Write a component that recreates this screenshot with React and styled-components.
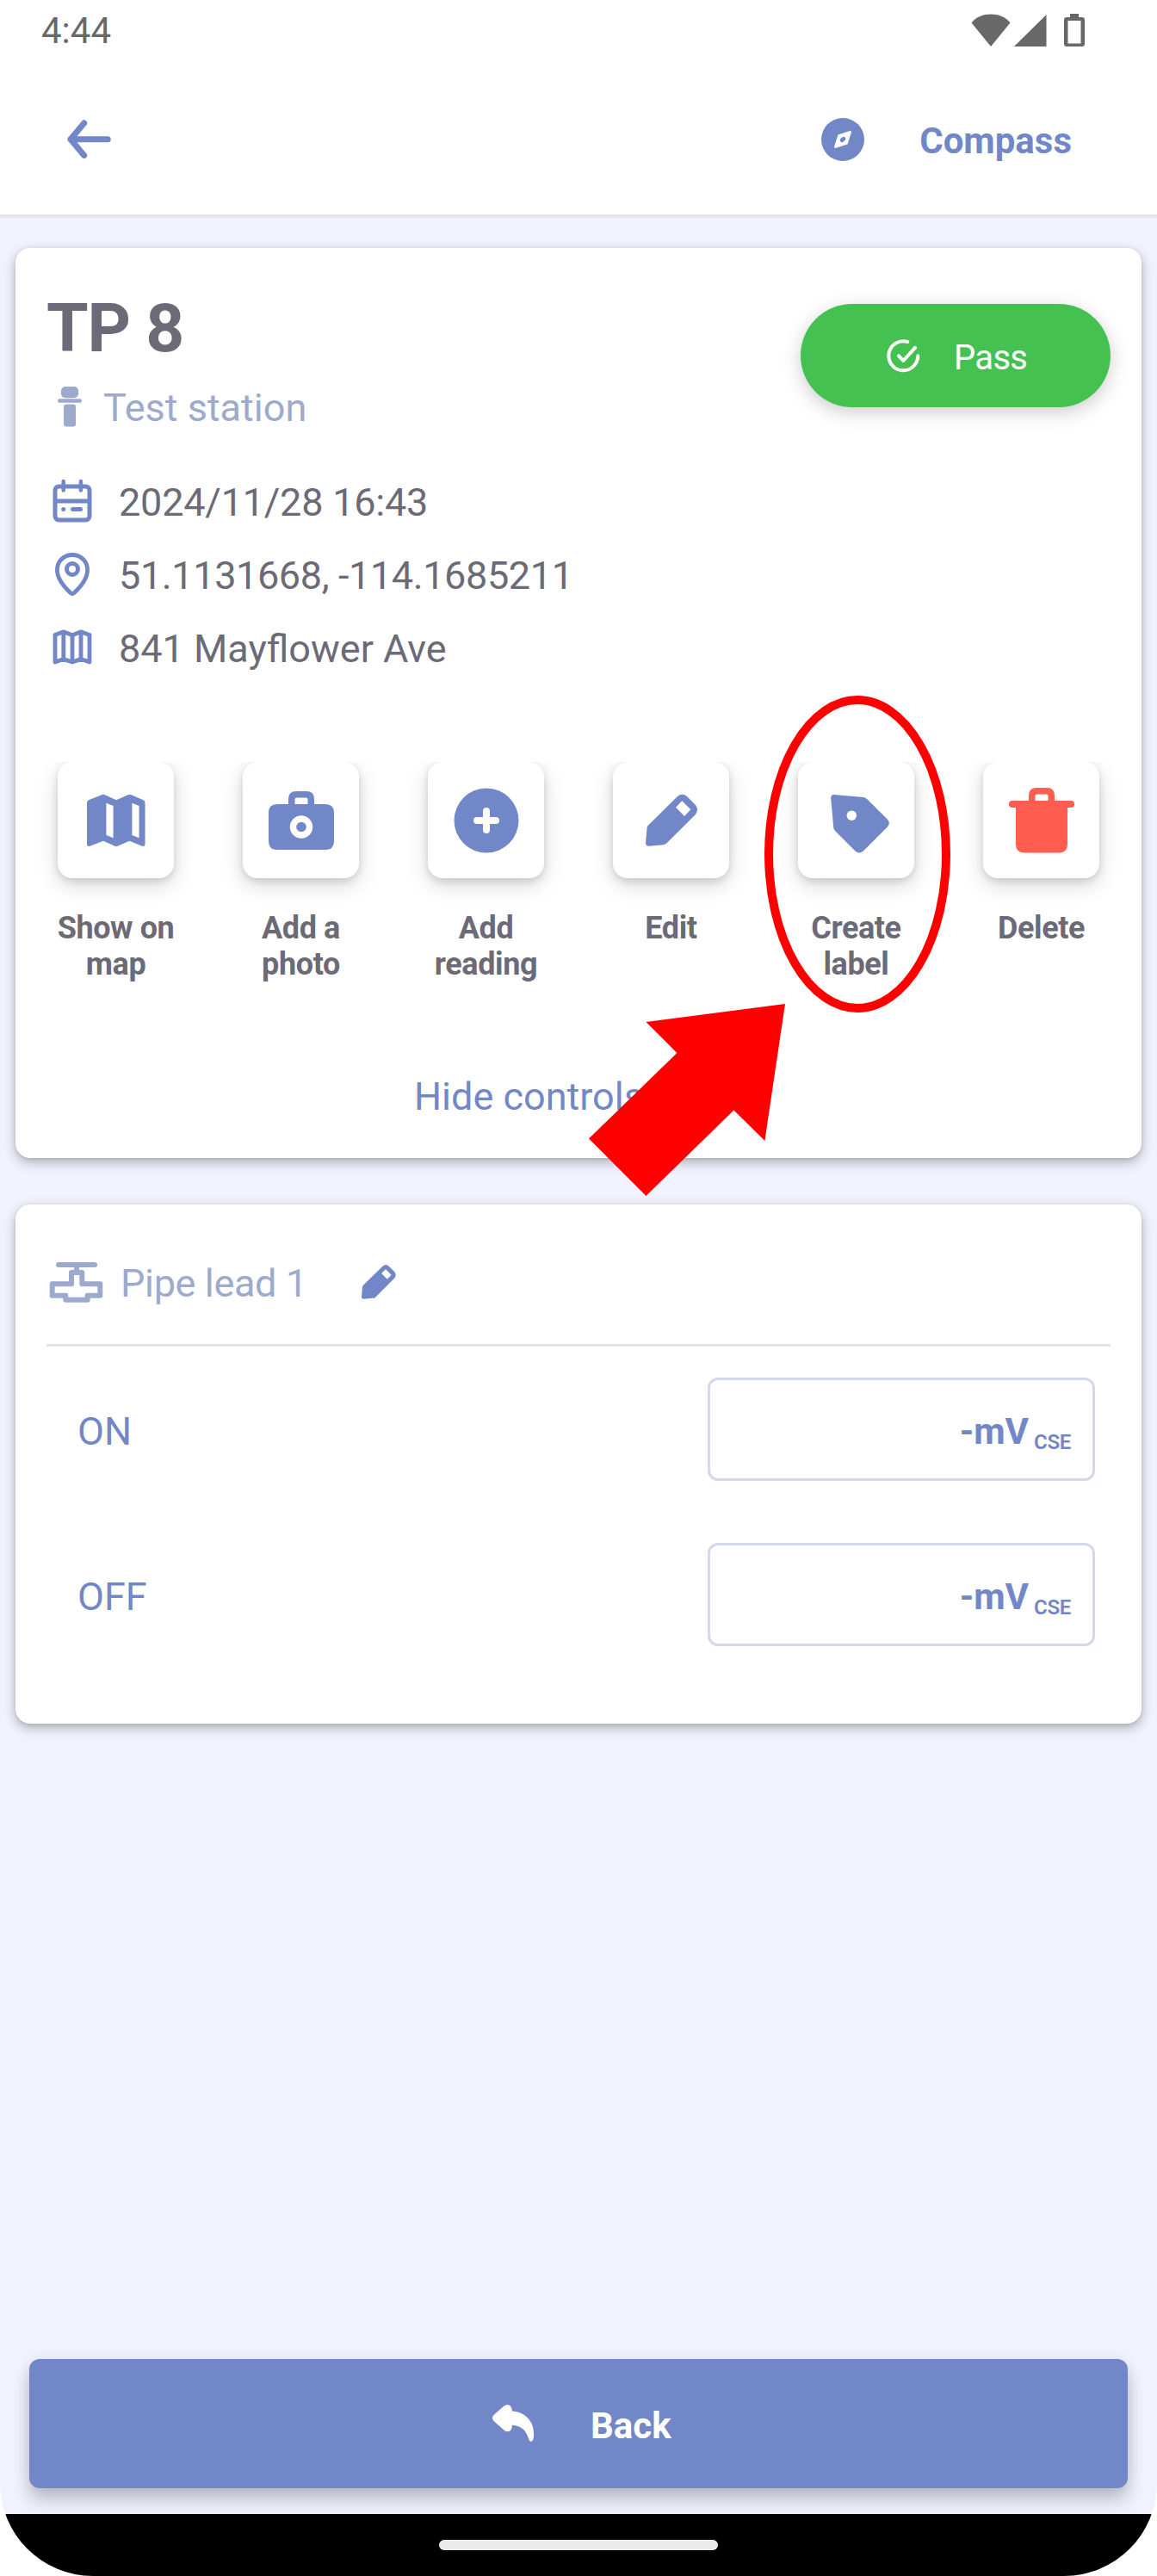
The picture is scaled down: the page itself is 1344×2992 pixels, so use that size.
import React from "react";
import styled, { createGlobalStyle } from "styled-components";

const BLUE = "#7187c7";
const MUTED = "#9daacd";
const INK = "#6b6a76";

const GlobalStyle = createGlobalStyle`
  * { box-sizing: border-box; }
  body { margin: 0; background: #fff; font-family: Roboto, "Liberation Sans", sans-serif; }
`;

const Screen = styled.div`
  position: relative;
  display: flex;
  flex-direction: column;
  width: 1344px;
  height: 2992px;
  background: #f0f3fd;
  border-radius: 0 0 108px 108px;
  overflow: hidden;
`;

const StatusBar = styled.div`
  display: flex;
  align-items: center;
  justify-content: space-between;
  height: 70px;
  padding: 0 84px 0 48px;
  background: #fff;
`;

const Clock = styled.span`
  padding-top: 2px;
  font-size: 42px;
  line-height: 70px;
  color: #686868;
`;

const Header = styled.header`
  display: flex;
  align-items: center;
  justify-content: space-between;
  height: 183px;
  padding: 4px 99px 0 78px;
  background: #fff;
  border-bottom: 4px solid #e2e5f1;
`;

const IconButton = styled.button`
  display: flex;
  padding: 0;
  border: 0;
  background: none;
`;

const CompassLink = styled.div`
  display: flex;
  align-items: center;
  gap: 64px;
  font-size: 42px;
  font-weight: 700;
  line-height: 50px;
  color: ${BLUE};
  span { padding-top: 5px; }
`;

const Content = styled.main`
  flex: 1;
  display: flex;
  flex-direction: column;
  gap: 54px;
  padding: 35px 18px 0;
`;

const Card = styled.section`
  display: flex;
  flex-direction: column;
  height: ${(p) => p.$height}px;
  background: #fff;
  border-radius: 17px;
  box-shadow: 0 5px 14px rgba(0, 0, 0, 0.28), 0 1px 4px rgba(0, 0, 0, 0.1);
`;

const Summary = styled.div`
  display: flex;
  justify-content: space-between;
  padding: 44px 36px 0;
`;

const Title = styled.h1`
  margin: 0;
  padding-top: 1px;
  font-size: 78.5px;
  line-height: 96px;
  font-weight: 700;
  letter-spacing: -1.2px;
  color: ${INK};
`;

const Kind = styled.div`
  display: flex;
  align-items: center;
  gap: 25px;
  height: 60px;
  margin-top: 13px;
  padding-left: 13px;
  font-size: 45px;
  color: ${MUTED};
  span { padding-top: 3px; }
`;

const PassBadge = styled.button`
  display: flex;
  align-items: center;
  gap: 39px;
  width: 360px;
  height: 120px;
  margin-top: 21px;
  padding: 0 0 0 100px;
  border: 0;
  border-radius: 60px;
  background: #45c151;
  color: #fff;
  font: 400 40px/48px Roboto, sans-serif;
  letter-spacing: -0.7px;
  box-shadow: 0 6px 22px rgba(0, 0, 0, 0.2);
  span { padding-top: 6px; }
`;

const MetaList = styled.ul`
  list-style: none;
  margin: 37px 0 0;
  padding: 0 41px;
`;

const MetaRow = styled.li`
  display: flex;
  align-items: center;
  height: 85px;
  font-size: 45px;
  letter-spacing: ${(p) => p.$spacing}px;
  color: ${INK};
`;

const MetaIcon = styled.span`
  display: flex;
  justify-content: center;
  width: 50px;
  margin-right: 29px;
`;

const MetaText = styled.span`
  padding-top: 3px;
`;

const Actions = styled.div`
  display: grid;
  grid-template-columns: repeat(6, 215px);
  height: 300px;
  margin: 91px 9px 0;
  overflow: hidden;
`;

const Action = styled.div`
  display: flex;
  flex-direction: column;
  align-items: center;
  gap: 37px;
`;

const Tile = styled.button`
  width: 135px;
  height: 135px;
  padding: 0;
  border: 0;
  border-radius: 17px;
  background: #fff;
  box-shadow: 0 8px 24px rgba(0, 0, 0, 0.16), 0 3px 8px rgba(0, 0, 0, 0.12);
  svg { display: block; }
`;

const ActionLabel = styled.span`
  width: 144px;
  font-size: 36px;
  font-weight: 700;
  line-height: 42px;
  letter-spacing: -0.4px;
  text-align: center;
  color: ${INK};
`;

const ToggleLink = styled.a`
  margin: 62px 0 0 463px;
  font-size: 45px;
  line-height: 54px;
  color: ${BLUE};
`;

const LeadHeader = styled.div`
  display: flex;
  align-items: center;
  height: 165px;
  margin: 0 36px;
  padding: 18px 0 0 3px;
  border-bottom: 3px solid #e1e4ef;
  font-size: 45px;
  color: ${MUTED};
`;

const LeadName = styled.span`
  margin: 0 63px 0 20px;
  padding-top: 3px;
  letter-spacing: -0.35px;
`;

const Reading = styled.label`
  display: flex;
  align-items: center;
  justify-content: space-between;
  height: 120px;
  margin: ${(p) => p.$gap}px 54px 0 72px;
  font-size: 45px;
  color: ${BLUE};
`;

const ReadingName = styled.span`
  padding-top: 5px;
`;

const Field = styled.div`
  display: flex;
  align-items: center;
  justify-content: flex-end;
  width: 450px;
  height: 120px;
  padding: 5px 25px 0 0;
  border: 3px solid #d3d9ea;
  border-radius: 12px;
  font-size: 42px;
  line-height: 50px;
  font-weight: 700;
`;

const Reference = styled.span`
  margin-left: 6px;
  padding-top: 24px;
  font-size: 24px;
  line-height: 30px;
  font-weight: 600;
  letter-spacing: -0.3px;
`;

const BackButton = styled.button`
  display: flex;
  align-items: center;
  height: 150px;
  margin: 0 34px 30px;
  padding: 0 0 0 538px;
  border: 0;
  border-radius: 12px;
  background: ${BLUE};
  color: #fff;
  font: 700 42px/50px Roboto, sans-serif;
  box-shadow: 0 15px 20px rgba(0, 0, 0, 0.18), 0 3px 18px rgba(0, 0, 0, 0.1);
  span { margin-left: 65px; padding-top: 5px; }
`;

const NavBar = styled.div`
  position: relative;
  display: flex;
  justify-content: center;
  height: 72px;
  padding-top: 30px;
  background: #000;
`;

const NavHandle = styled.div`
  width: 324px;
  height: 12px;
  border-radius: 6px;
  background: #ebebeb;
`;

const Markup = styled.svg`
  position: absolute;
  left: 680px;
  top: 800px;
`;

const StatusIcons = () => (
  <svg width="132" height="40" viewBox="0 0 132 40" fill="#686868">
    <path d="M0.5 11.5C6 4.500 14 1.500 23 1.500S40 4.500 45.500 11.500L23 39Z" />
    <path d="M50 39L87.500 2V39Z" />
    <path fillRule="evenodd" d="M116 1h10v4h4q3 0 3 3v28q0 3-3 3h-18q-3 0-3-3V8q0-3 3-3h4ZM113.500 9v26.500h15V9Z" transform="translate(-1)" />
  </svg>
);

const ArrowLeft = () => (
  <svg width="51" height="46" viewBox="0 0 51 46" fill="none" stroke={BLUE} strokeWidth="7" strokeLinecap="round" strokeLinejoin="round">
    <path d="M47.200 22.800H4M19.700 4L4 22.800L19.700 41.600" />
  </svg>
);

const CompassIcon = () => (
  <svg width="50" height="50" viewBox="0 0 50 50">
    <circle cx="25" cy="25" r="25" fill={BLUE} />
    <path d="M20.500 20.500L33.700 16.300L29.500 29.500L16.300 33.700Z" fill="#fff" stroke="#fff" strokeWidth="2.500" strokeLinejoin="round" />
    <ellipse cx="25" cy="25" rx="2.500" ry="3.700" transform="rotate(45 25 25)" fill={BLUE} />
  </svg>
);

const CheckCircle = () => (
  <svg width="39" height="39" viewBox="0 0 39 39" fill="none" stroke="#fff" strokeWidth="4" strokeLinecap="round" strokeLinejoin="round">
    <path d="M24.300 3A17 17 0 1 0 36.300 19.300" />
    <path d="M14 19.300L19.300 25L33 9.800" />
  </svg>
);

const StationIcon = () => (
  <svg width="28" height="47" viewBox="0 0 28 47" fill={MUTED}>
    <rect x="4" width="20" height="13.300" rx="5" />
    <rect y="14.300" width="28" height="4.400" rx="2.200" />
    <rect x="7" y="20.500" width="14" height="26" rx="3" />
  </svg>
);

const CalendarIcon = () => (
  <svg width="46" height="51" viewBox="0 0 46 51" fill="none" stroke={BLUE} strokeWidth="5" strokeLinecap="round">
    <rect x="3" y="9" width="40" height="39" rx="4.500" />
    <path d="M3 26H43" strokeLinecap="butt" />
    <path d="M12.700 3V13.500M32.900 3V13.500" strokeWidth="4.500" />
    <path d="M12.700 35.600h.01M23.500 35.600H32.500" />
  </svg>
);

const PinIcon = () => (
  <svg width="40" height="50" viewBox="0 0 40 50" fill="none" stroke={BLUE} strokeWidth="4.800" strokeLinejoin="round">
    <path d="M20 2.500C10 2.500 2.400 10 2.400 20C2.400 31 13 42 17.800 46.500Q20 48.500 22.200 46.500C27 42 37.600 31 37.600 20C37.600 10 30 2.500 20 2.500Z" />
    <circle cx="20" cy="19" r="6.500" strokeWidth="5" />
  </svg>
);

const MapOutline = () => (
  <svg width="46" height="41" viewBox="0 0 46 41" fill="none" stroke={BLUE} strokeWidth="4.800" strokeLinejoin="round">
    <path d="M3 6.500L12.800 2.800L23 6.800L33 2.800L43 6.500V38L33 34.500L23 38L12.800 34.500L3 38Z" />
    <path d="M12.800 3V35M23 6V37M33 3V35" />
  </svg>
);

const Pencil = ({ size }) => (
  <svg width={size} height={size} viewBox={size === 135 ? "0 0 135 135" : "38 37.500 60.500 60.500"} fill={BLUE}>
    <path fillRule="evenodd" d="M41 73.500L75 40Q80.300 35.300 86 40L96 50Q100 55.500 96 61L62 94.800Q60.500 96 58 96.200L42 97.700Q38 97.700 38 94L39.500 77Q39.800 74.700 41 73.500ZM80.300 45.300L90.300 55.300L83 63L73 52.700Z" />
  </svg>
);

const MapIcon = () => (
  <svg width="135" height="135" fill={BLUE}>
    <path fillRule="evenodd" d="M36 44.300L51 38.300Q53 37 55 38.300L68 44.300L81.500 38.300Q83.500 37 85.500 38.300L99.500 44.200Q101.500 45.200 101.500 47.500V95Q101.500 99 97.500 97.600L83.500 91.700L70 97.500Q68 98.500 66 97.500L53 91.700L38 97.600Q34 99 34 95V47.500Q34 45.200 36 44.300ZM56.400 47.700V85L64.600 88.300V51ZM86.400 47.700V85L94.600 88.300V51Z" />
  </svg>
);

const CameraIcon = () => (
  <svg width="135" height="135" fill={BLUE}>
    <path fillRule="evenodd" d="M53 49V43Q53 34 62 34H74Q83 34 83 43V49H96Q106 49 106 59V92Q106 102 96 102H40Q30 102 30 92V59Q30 49 40 49ZM60.500 49H75.500V43.500Q75.500 41.400 73.500 41.400H62.500Q60.500 41.400 60.500 43.500Z" />
    <circle cx="68" cy="75.500" r="13.200" fill="#fff" />
    <circle cx="68" cy="75.500" r="5.800" />
  </svg>
);

const PlusIcon = () => (
  <svg width="135" height="135">
    <circle cx="68" cy="68" r="37.500" fill={BLUE} />
    <path d="M57 68H79M68 57V79" stroke="#fff" strokeWidth="8" strokeLinecap="round" />
  </svg>
);

const TagIcon = () => (
  <svg width="135" height="135" fill={BLUE}>
    <path d="M42 38L76 41Q78.500 41.300 80 43L103.800 66.500Q108 71 103.800 75.500L75.800 103.500Q71 107.600 66.500 103.500L43 80Q41.300 78.300 41.200 76L38.200 42Q38 37.800 42 38Z" />
    <circle cx="62.300" cy="62.300" r="5.700" fill="#fff" />
  </svg>
);

const TrashIcon = () => (
  <svg width="135" height="135" fill="#ff5d50">
    <path fillRule="evenodd" d="M53 45V39Q53 30 62 30H74Q83 30 83 39V45H102.500Q106 45 106 49T102.500 53H98V95.500Q98 105.500 88 105.500H48Q38 105.500 38 95.500V53H33.500Q30 53 30 49T33.500 45ZM60.500 45H75.500V39.600Q75.500 37.600 73.500 37.600H62.500Q60.500 37.600 60.500 39.600Z" />
  </svg>
);

const ValveIcon = () => (
  <svg width="63" height="49" viewBox="0 0 63 49" fill="none" stroke={MUTED} strokeWidth="6" strokeLinejoin="round">
    <path d="M11 4H53" strokeLinecap="round" />
    <path d="M32 4V13M26 26.300V13H38.300V26.300H59.300V39.700H44.700V44.700H19.300V39.700H3.700V26.300Z" />
  </svg>
);

const ReplyIcon = () => (
  <svg width="49" height="44" viewBox="0 0 49 44" fill="#fff">
    <path d="M1.500 12L13.500 1.500Q17.500 -1.500 21 1.500Q22.800 3.500 22.800 7.500C36 8 48 18 48 33C48.300 38 47.500 42.500 44.800 42.800C42.500 42.500 42 39 40.500 35.500C37.500 28 31 24 22.800 23.700Q23 28 21 30Q17.500 32.500 14 30L1.500 19Q-1.500 15.500 1.500 12Z" />
  </svg>
);

const ACTIONS = [
  { label: "Show on map", icon: <MapIcon /> },
  { label: "Add a photo", icon: <CameraIcon /> },
  { label: "Add reading", icon: <PlusIcon /> },
  { label: "Edit", icon: <Pencil size={135} /> },
  { label: "Create label", icon: <TagIcon /> },
  { label: "Delete", icon: <TrashIcon /> },
];

const META = [
  { text: "2024/11/28 16:43", icon: <CalendarIcon />, spacing: -0.22 },
  { text: "51.1131668, -114.1685211", icon: <PinIcon />, spacing: -0.38 },
  { text: "841 Mayflower Ave", icon: <MapOutline />, spacing: 0 },
];

export default function App() {
  return (
    <>
      <GlobalStyle />
      <Screen>
        <StatusBar>
          <Clock>4:44</Clock>
          <StatusIcons />
        </StatusBar>
        <Header>
          <IconButton aria-label="Go back"><ArrowLeft /></IconButton>
          <CompassLink>
            <CompassIcon />
            <span>Compass</span>
          </CompassLink>
        </Header>
        <Content>
          <Card $height={1057}>
            <Summary>
              <div>
                <Title>TP 8</Title>
                <Kind><StationIcon /><span>Test station</span></Kind>
              </div>
              <PassBadge><CheckCircle /><span>Pass</span></PassBadge>
            </Summary>
            <MetaList>
              {META.map((m) => (
                <MetaRow key={m.text} $spacing={m.spacing}>
                  <MetaIcon>{m.icon}</MetaIcon>
                  <MetaText>{m.text}</MetaText>
                </MetaRow>
              ))}
            </MetaList>
            <Actions>
              {ACTIONS.map((a) => (
                <Action key={a.label}>
                  <Tile aria-label={a.label}>{a.icon}</Tile>
                  <ActionLabel>{a.label}</ActionLabel>
                </Action>
              ))}
            </Actions>
            <ToggleLink>Hide controls</ToggleLink>
          </Card>
          <Card $height={603}>
            <LeadHeader>
              <ValveIcon />
              <LeadName>Pipe lead 1</LeadName>
              <Pencil size={40} />
            </LeadHeader>
            <Reading $gap={36}>
              <ReadingName>ON</ReadingName>
              <Field>-mV<Reference>CSE</Reference></Field>
            </Reading>
            <Reading $gap={72}>
              <ReadingName>OFF</ReadingName>
              <Field>-mV<Reference>CSE</Reference></Field>
            </Reading>
          </Card>
        </Content>
        <BackButton><ReplyIcon /><span>Back</span></BackButton>
        <NavBar><NavHandle /></NavBar>
        <Markup width="440" height="600" viewBox="680 800 440 600">
          <ellipse cx="996" cy="992" rx="103" ry="179" fill="none" stroke="#f00" strokeWidth="10" />
          <path d="M912 1166L888.400 1325L852.400 1289.400L750.400 1389L684 1322.600L786.400 1223L750.400 1187Z" fill="#f00" />
        </Markup>
      </Screen>
    </>
  );
}
